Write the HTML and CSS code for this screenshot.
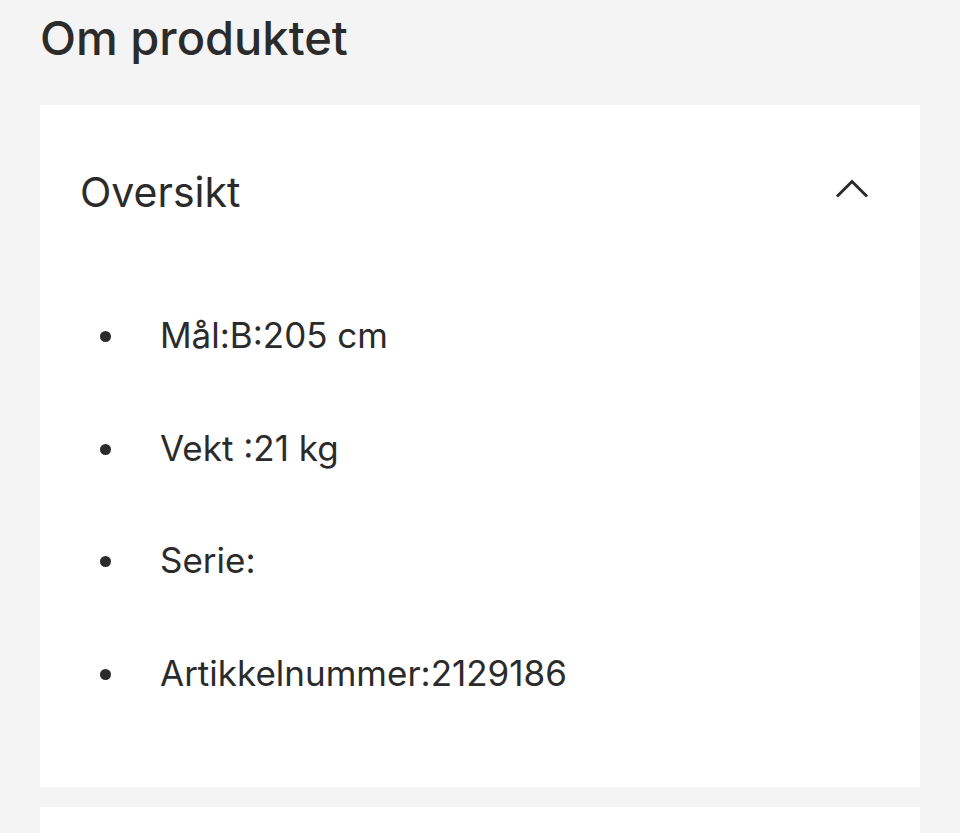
FILE: index.html
```html
<!DOCTYPE html>
<html lang="no">
<head>
<meta charset="utf-8">
<title>Om produktet</title>
<link rel="stylesheet" href="styles.css">
</head>
<body>
<main class="page">
  <h1 class="title">Om produktet</h1>
  <section class="card">
    <div class="card-head">
      <h2 class="card-title">Oversikt</h2>
      <svg class="chevron" width="36" height="24" viewBox="0 0 36 24" aria-hidden="true">
        <path d="M4 18.5 L18 4.5 L32 18.5" fill="none" stroke="#2b2b2b" stroke-width="3" stroke-linecap="square" stroke-linejoin="miter"/>
      </svg>
    </div>
    <ul class="specs">
      <li class="spec">Mål:B:205 cm</li>
      <li class="spec">Vekt :21 kg</li>
      <li class="spec">Serie:</li>
      <li class="spec">Artikkelnummer:2129186</li>
    </ul>
  </section>
  <section class="card card-next"></section>
</main>
</body>
</html>
```
FILE: styles.css
```css
html, body {
  margin: 0;
  padding: 0;
  background: #f4f4f4;
}
body {
  font-family: Inter, "Noto Sans", "Liberation Sans", sans-serif;
  color: #2b2b2b;
  overflow: hidden;
  height: 833px;
}
.page {
  padding: 0 40px;
}
.title {
  margin: 0;
  padding-top: 10px;
  height: 105px;
  box-sizing: border-box;
  font-size: 47px;
  line-height: 56px;
  font-weight: 500;
  letter-spacing: 0;
}
.card {
  background: #fff;
  padding: 0 40px 58px;
}
.card-head {
  height: 174px;
  display: flex;
  align-items: center;
  justify-content: space-between;
  padding-right: 10px;
}
.card-title {
  margin: 0;
  font-size: 41px;
  font-weight: 400;
  letter-spacing: 0;
}
.chevron {
  display: block;
  margin-top: -6px;
}
.specs {
  list-style: none;
  margin: 0;
  padding: 0;
}
.spec {
  height: 112.5px;
  display: flex;
  align-items: center;
  font-size: 35px;
  letter-spacing: 0;
  padding-left: 80px;
  position: relative;
}
.spec::before {
  content: "";
  position: absolute;
  left: 19.5px;
  top: 50%;
  width: 11px;
  height: 11px;
  margin-top: -4px;
  border-radius: 50%;
  background: #2b2b2b;
}
.card-next {
  margin-top: 20px;
  height: 60px;
  padding: 0;
}
```
